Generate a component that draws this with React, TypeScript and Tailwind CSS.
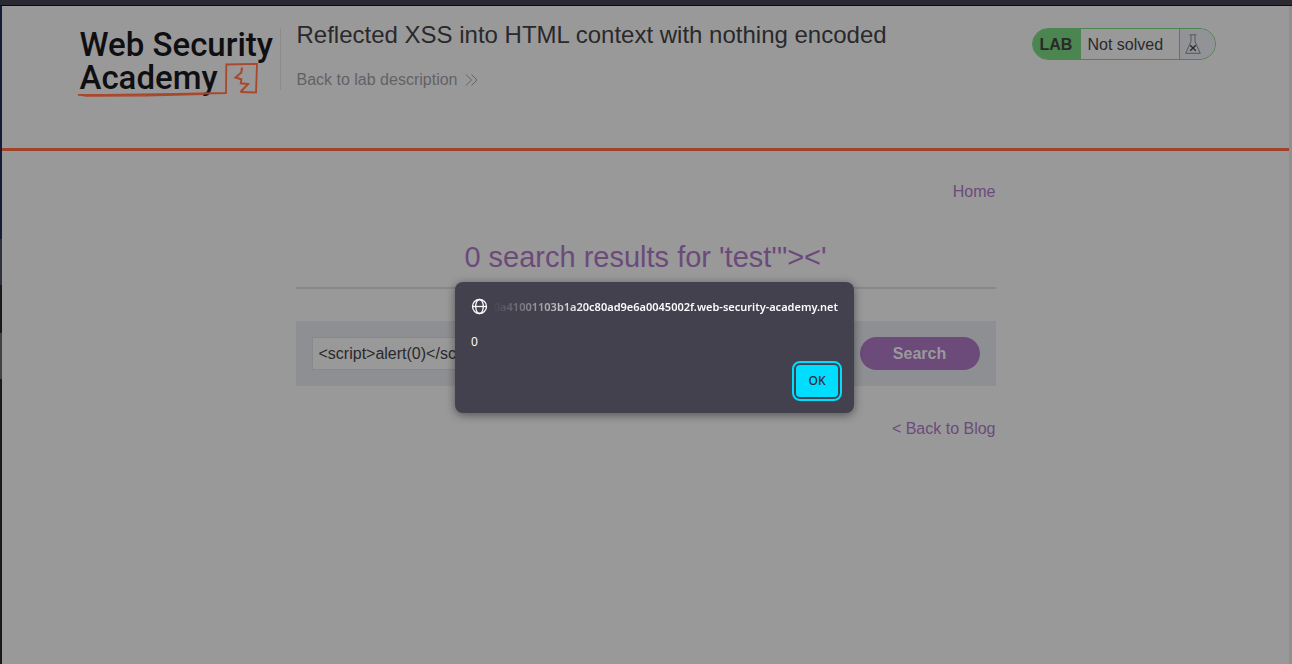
import { useState } from "react";

function Logo() {
  return (
    <a href="#academy" aria-label="Web Security Academy" className="relative block h-[80px] w-[200px] shrink-0 text-[#0f0f11]">
      <span className="block pt-[7px] pl-1 font-['Roboto',sans-serif] text-[33px] leading-[33px] font-medium whitespace-nowrap">
        <span className="block">Web Security</span>
        <span className="block">Academy</span>
      </span>
      <svg viewBox="0 0 200 80" className="absolute inset-0 h-full w-full" fill="none" aria-hidden="true">
        <path d="M2 73.800 L30 74 L100 73 L150 72 L150.300 43.500 L181 42.800 L180 71.500 L164.500 71" stroke="#a8482c" strokeWidth="1.8" />
        <path d="M2 73.600 L10 75 L70 74.800 L128 73.200" stroke="#a8482c" strokeWidth="1.4" />
        <path d="M166 46.500 L165.300 51.500 L159.500 56.500 L165.300 58.300 L164.800 62.300 L172 63 L164.500 71" stroke="#a8482c" strokeWidth="2" />
      </svg>
    </a>
  );
}

function LabStatus() {
  return (
    <div className="mt-[7px] ml-auto flex h-8 overflow-hidden rounded-full border border-[#4b854f] text-base leading-[31px] text-[#29292b]">
      <span className="w-12 bg-[#4b854f] pl-[7px] leading-8 font-bold">LAB</span>
      <span className="w-[98px] pl-[7px]">Not solved</span>
      <span className="flex w-9 border-l border-[#4b854f] bg-[#929396] pt-[5px] pl-[5px]">
        <svg width="16" height="20" viewBox="0 0 16 20" fill="none" stroke="#58585b" aria-hidden="true">
          <path d="M4.500.8h7M6 1v6.500L.7 19.300h14.600L10 7.500V1" />
          <path d="m5.200 11.200 5.600 5.600m0-5.600-5.600 5.600" stroke="#29292b" strokeWidth="1.3" />
        </svg>
      </span>
    </div>
  );
}

function AlertDialog({ onClose }: { onClose: () => void }) {
  return (
    <div className="absolute inset-x-0 top-[282px] flex justify-center pl-[17px]">
      <div
        role="alertdialog"
        aria-modal="true"
        aria-labelledby="alert-origin"
        aria-describedby="alert-message"
        className="w-[399px] rounded-lg bg-[#42414d] px-4 pt-4 pb-3 font-['Noto_Sans',sans-serif] text-xs text-[#fbfbfe] shadow-[0_2px_10px_rgba(0,0,0,0.45)]"
      >
        <div className="flex gap-1">
          <svg width="17" height="17" viewBox="0 0 17 17" fill="none" stroke="#fbfbfe" strokeWidth="1.3" className="shrink-0" aria-hidden="true">
            <circle cx="8.500" cy="8.500" r="7" />
            <ellipse cx="8.500" cy="8.500" rx="3.800" ry="7" />
            <path d="M1.500 8.500h14" />
          </svg>
          <div className="flex min-w-0 flex-1 justify-end overflow-hidden [mask-image:linear-gradient(to_right,transparent,black_96px)]">
            <h2 id="alert-origin" className="text-[11px] leading-[18px] font-semibold whitespace-nowrap">
              0a41001103b1a20c80ad9e6a0045002f.web-security-academy.net
            </h2>
          </div>
        </div>
        <p id="alert-message" className="mt-4 leading-[19px]">0</p>
        <div className="mt-2.5 flex justify-end">
          <button
            type="button"
            onClick={onClose}
            className="-mr-1 h-10 w-[50px] rounded-lg border-2 border-[#00ddff] bg-[#42414d] p-0.5 font-medium text-[#2b2a33]"
          >
            <span className="flex h-full items-center justify-center rounded bg-[#00ddff]">OK</span>
          </button>
        </div>
      </div>
    </div>
  );
}

export default function App() {
  const [open, setOpen] = useState(true);
  const [query, setQuery] = useState("<script>alert(0)</script>");

  return (
    <div className="relative flex min-h-screen flex-col bg-[#99999a] font-['Liberation_Sans',Arial,sans-serif] text-base text-[#29292b]">
      <div className="h-1.5 border-b border-[#0c0a12] bg-[#2b2a33]" />
      <div className="flex flex-1">
        <div className="w-0.5 bg-[linear-gradient(#141d36_0_233px,#2d313b_233px_279px,#19191b_279px_327px,#424244_327px_373px,#19191b_373px)]" />
        <div className="min-w-0 flex-1">
          <header className="h-[145px] border-b-[3px] border-[#a0432b]">
            <div className="mx-auto flex max-w-[1140px] items-start pt-[15px]">
              <Logo />
              <div className="mt-[7px] ml-1 h-[62px] border-l border-[#8b8b8d]" />
              <div className="pl-4">
                <h1 className="text-2xl leading-7">Reflected XSS into HTML context with nothing encoded</h1>
                <a href="#description" className="mt-[21px] flex items-center gap-2 leading-5 text-[#626264]">
                  Back to lab description
                  <svg width="13" height="12" viewBox="0 0 13 12" fill="none" stroke="#626264" aria-hidden="true">
                    <path d="m1 .5 5.500 5.500L1 11.500M6.500.5 12 6l-5.500 5.500" />
                  </svg>
                </a>
              </div>
              <LabStatus />
            </div>
          </header>

          <main className="mx-auto max-w-[700px] text-[#6c4a7a]">
            <nav className="flex justify-end pt-[31px] leading-5">
              <a href="#home">Home</a>
            </nav>
            <h2 className="mt-[37px] border-b-2 border-[#88888a] pb-3 text-center text-[29px] leading-9">
              0 search results for 'test'"&gt;&lt;'
            </h2>
            <form className="mt-8 flex gap-4 bg-[#8e8f93] p-4" onSubmit={(e) => e.preventDefault()}>
              <input
                type="text"
                aria-label="Search the blog"
                value={query}
                onChange={(e) => setQuery(e.target.value)}
                className="h-[33px] min-w-0 flex-1 border border-[#88898c] bg-[#99999a] px-1.5 text-[#29292b]"
              />
              <button type="submit" className="h-[33px] w-[120px] rounded-full bg-[#6c4a7a] font-bold text-[#99999a]">
                Search
              </button>
            </form>
            <div className="flex justify-end pt-[33px] leading-5">
              <a href="#blog">&lt; Back to Blog</a>
            </div>
          </main>
        </div>
        <div className="w-[3px] bg-[#8f8f90]" />
      </div>
      {open && <AlertDialog onClose={() => setOpen(false)} />}
    </div>
  );
}
